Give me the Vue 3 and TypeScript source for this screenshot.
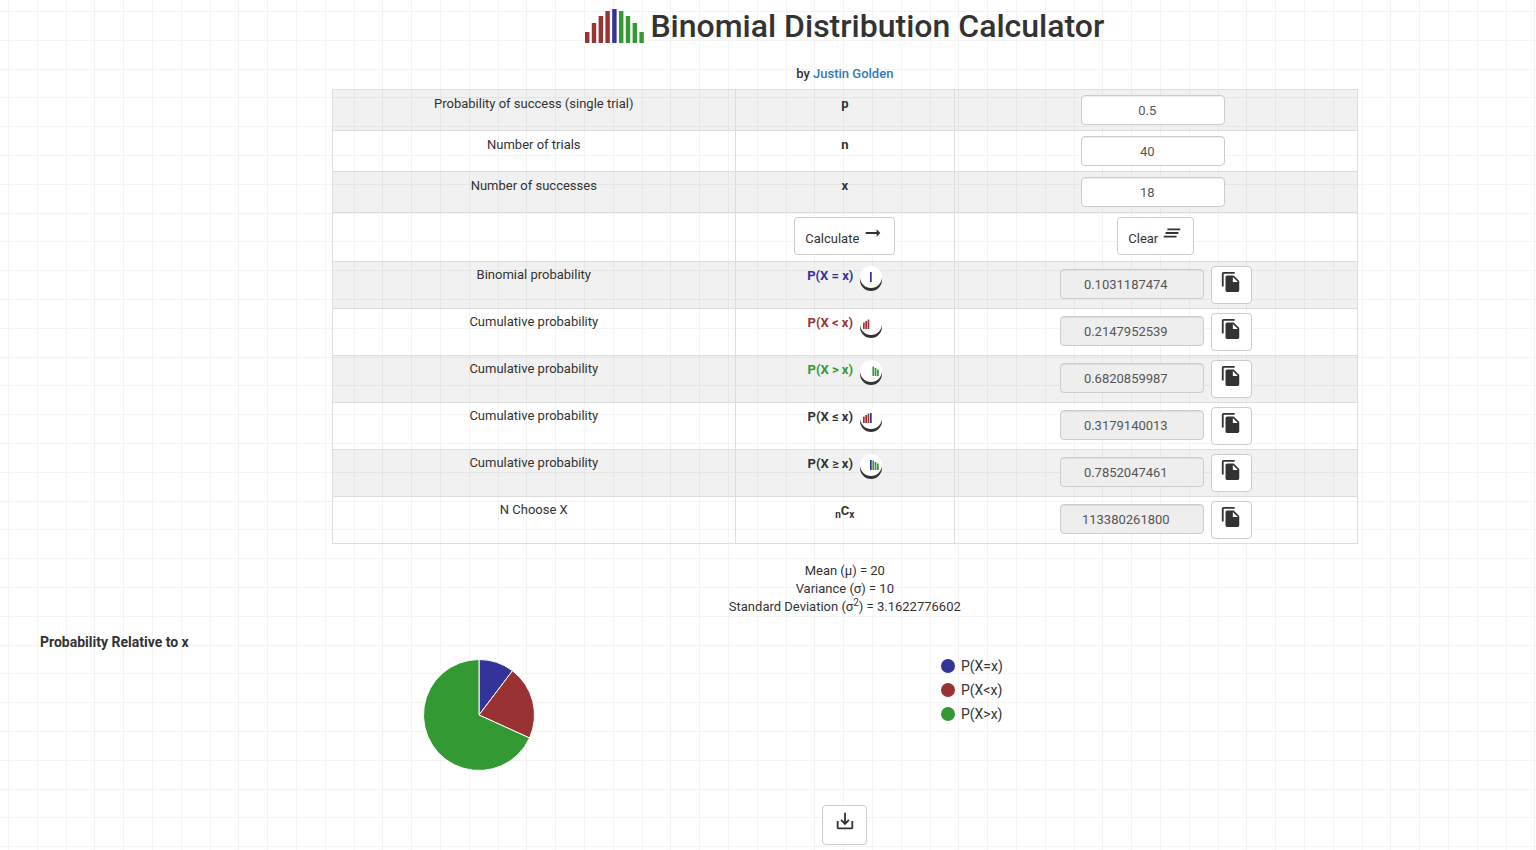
<script setup lang="ts">
import { computed, ref } from 'vue'

type Tone = 'blue' | 'red' | 'green' | 'dark'
interface Bar { x: number; h: number; tone: Tone }

const pInput = ref('0.5')
const nInput = ref('40')
const xInput = ref('18')
const params = ref({ p: 0.5, n: 40, x: 18 })

function calculate(): void {
  params.value = { p: Number(pInput.value), n: Number(nInput.value), x: Number(xInput.value) }
}
function clearAll(): void {
  pInput.value = ''
  nInput.value = ''
  xInput.value = ''
}
function copy(text: string): void {
  navigator.clipboard?.writeText(text)
}

function choose(n: number, k: number): number {
  let r = 1
  for (let i = 1; i <= k; i++) r = (r * (n - k + i)) / i
  return Math.round(r)
}
function pmf(k: number): number {
  const { p, n } = params.value
  return choose(n, k) * Math.pow(p, k) * Math.pow(1 - p, n - k)
}

const equal = computed(() => pmf(params.value.x))
const less = computed(() => {
  let s = 0
  for (let i = 0; i < params.value.x; i++) s += pmf(i)
  return s
})
const greater = computed(() => 1 - less.value - equal.value)
const mean = computed(() => params.value.n * params.value.p)
const variance = computed(() => mean.value * (1 - params.value.p))
const deviation = computed(() => Math.sqrt(variance.value).toFixed(10))

const logoBars: Bar[] = [11, 20, 27, 32, 34, 32, 27, 20, 11].map((h, i) => ({
  x: i * 6.8, h, tone: i < 4 ? 'red' : i === 4 ? 'blue' : 'green',
}))
const lowBars: Bar[] = [
  { x: 3, h: 6.4, tone: 'red' }, { x: 5.3, h: 8, tone: 'red' }, { x: 7.6, h: 9.4, tone: 'red' },
]
const midBar: Bar = { x: 10, h: 10, tone: 'blue' }
const highBars: Bar[] = [
  { x: 12.4, h: 9.4, tone: 'green' }, { x: 14.7, h: 8, tone: 'green' }, { x: 17, h: 6.4, tone: 'green' },
]

const inputs = [
  { id: 'p', label: 'Probability of success (single trial)', model: pInput },
  { id: 'n', label: 'Number of trials', model: nInput },
  { id: 'x', label: 'Number of successes', model: xInput },
]
const results = computed(() => [
  { id: 'eq', label: 'Binomial probability', sym: 'P(X = x)', tone: 'blue', bars: [midBar], value: equal.value.toFixed(10) },
  { id: 'lt', label: 'Cumulative probability', sym: 'P(X < x)', tone: 'red', bars: lowBars, value: less.value.toFixed(10) },
  { id: 'gt', label: 'Cumulative probability', sym: 'P(X > x)', tone: 'green', bars: highBars, value: greater.value.toFixed(10) },
  { id: 'le', label: 'Cumulative probability', sym: 'P(X ≤ x)', tone: 'dark', bars: [...lowBars, midBar], value: (less.value + equal.value).toFixed(10) },
  { id: 'ge', label: 'Cumulative probability', sym: 'P(X ≥ x)', tone: 'dark', bars: [midBar, ...highBars], value: (1 - less.value).toFixed(10) },
  { id: 'nc', label: 'N Choose X', sym: '', tone: 'dark', bars: [] as Bar[], value: String(choose(params.value.n, params.value.x)) },
])

const slices = computed(() => {
  const parts = [
    { tone: 'blue', label: 'P(X=x)', v: equal.value },
    { tone: 'red', label: 'P(X<x)', v: less.value },
    { tone: 'green', label: 'P(X>x)', v: greater.value },
  ]
  let from = 0
  const point = (t: number) => `${56 + 55.5 * Math.sin(2 * Math.PI * t)} ${56 - 55.5 * Math.cos(2 * Math.PI * t)}`
  return parts.map((s) => {
    const d = `M56 56L${point(from)}A55.5 55.5 0 ${s.v > 0.5 ? 1 : 0} 1 ${point(from + s.v)}Z`
    from += s.v
    return { ...s, d }
  })
})
</script>

<template>
  <div class="page">
    <main class="content">
      <header>
        <h1>
          <svg class="logo" width="59" height="34" viewBox="0 0 59 34" aria-hidden="true">
            <rect v-for="b in logoBars" :key="b.x" :class="b.tone" :x="b.x" :y="34 - b.h" width="4.4" :height="b.h" />
          </svg>
          <span>Binomial Distribution Calculator</span>
        </h1>
        <p class="byline">by <a href="#">Justin Golden</a></p>
      </header>

      <table>
        <colgroup><col class="side"><col class="mid"><col class="side"></colgroup>
        <tbody>
          <tr v-for="f in inputs" :key="f.id" class="entry">
            <td><label :for="f.id">{{ f.label }}</label></td>
            <th scope="row">{{ f.id }}</th>
            <td><input :id="f.id" v-model="f.model.value" class="field given" type="text" inputmode="decimal"></td>
          </tr>
          <tr class="actions">
            <td></td>
            <td>
              <button type="button" class="btn" @click="calculate">
                <span>Calculate</span>
                <svg class="icon" viewBox="0 0 24 24" aria-hidden="true"><path d="M16.01 11H4v2h12.01v3L20 12l-3.99-4z" /></svg>
              </button>
            </td>
            <td>
              <button type="button" class="btn" @click="clearAll">
                <span>Clear</span>
                <svg class="icon" viewBox="0 0 24 24" aria-hidden="true"><path d="M5 13h14v-2H5v2zm-2 4h14v-2H3v2zM7 7v2h14V7H7z" /></svg>
              </button>
            </td>
          </tr>
          <tr v-for="r in results" :key="r.id" class="result">
            <td><label :for="r.id">{{ r.label }}</label></td>
            <th scope="row">
              <span v-if="r.sym" class="symbol" :class="r.tone">
                <span>{{ r.sym }}</span>
                <svg class="badge" width="22" height="22" viewBox="0 0 22 22" aria-hidden="true">
                  <rect v-for="b in r.bars" :key="b.x" :class="b.tone" :x="b.x" :y="16 - b.h" width="1.7" :height="b.h" />
                </svg>
              </span>
              <span v-else class="choose"><sub>n</sub>C<sub>x</sub></span>
            </th>
            <td>
              <div class="output">
                <input :id="r.id" class="field" type="text" readonly :value="r.value">
                <button type="button" class="btn copy" aria-label="Copy" @click="copy(r.value)">
                  <svg class="icon" viewBox="0 0 24 24" aria-hidden="true"><path fill-rule="evenodd" d="M16 1H4c-1.1 0-2 .9-2 2v14h2V3h12V1zm-1 4l6 6v10c0 1.1-.9 2-2 2H7.99C6.89 23 6 22.1 6 21l.01-14c0-1.1.89-2 1.99-2h7zm-1 7h5.5L14 6.5V12z" /></svg>
                </button>
              </div>
            </td>
          </tr>
        </tbody>
      </table>

      <div class="stats">
        <div>Mean (μ) = {{ mean }}</div>
        <div>Variance (σ) = {{ variance }}</div>
        <div>Standard Deviation (σ<sup>2</sup>) = {{ deviation }}</div>
      </div>
    </main>

    <section class="chart">
      <h2>Probability Relative to x</h2>
      <div class="plot">
        <div class="pie">
          <svg width="112" height="112" viewBox="0 0 112 112" role="img" aria-label="Probability Relative to x">
            <path v-for="s in slices" :key="s.tone" :class="s.tone" :d="s.d" stroke="#fff" stroke-width="1" />
          </svg>
        </div>
        <ul class="legend">
          <li v-for="s in slices" :key="s.tone"><i class="dot" :class="s.tone"></i>{{ s.label }}</li>
        </ul>
      </div>
    </section>

    <footer>
      <button type="button" class="btn save" aria-label="Download">
        <svg class="icon" viewBox="0 0 24 24" aria-hidden="true"><path d="M19 12v7H5v-7H3v7c0 1.1.9 2 2 2h14c1.1 0 2-.9 2-2v-7h-2zm-6 .67l2.59-2.58L17 11.5l-5 5-5-5 1.41-1.41L11 12.67V3h2z" /></svg>
      </button>
    </footer>
  </div>
</template>

<style>
body {
  --line: #f4f4f4;
  background-color: #fff;
  background-image:
    linear-gradient(to right, var(--line) 1px, transparent 1px),
    linear-gradient(to right, transparent 20%, var(--line) 20%, var(--line) calc(20% + 1px), transparent calc(20% + 1px)),
    linear-gradient(to right, transparent 40%, var(--line) 40%, var(--line) calc(40% + 1px), transparent calc(40% + 1px)),
    linear-gradient(to right, transparent 60%, var(--line) 60%, var(--line) calc(60% + 1px), transparent calc(60% + 1px)),
    linear-gradient(to right, transparent 80%, var(--line) 80%, var(--line) calc(80% + 1px), transparent calc(80% + 1px)),
    linear-gradient(to bottom, var(--line) 1px, transparent 1px),
    linear-gradient(to bottom, transparent 20%, var(--line) 20%, var(--line) calc(20% + 1px), transparent calc(20% + 1px)),
    linear-gradient(to bottom, transparent 40%, var(--line) 40%, var(--line) calc(40% + 1px), transparent calc(40% + 1px)),
    linear-gradient(to bottom, transparent 60%, var(--line) 60%, var(--line) calc(60% + 1px), transparent calc(60% + 1px)),
    linear-gradient(to bottom, transparent 80%, var(--line) 80%, var(--line) calc(80% + 1px), transparent calc(80% + 1px));
  background-size: 144px 144px;
  background-position: 8px 11px;
}
</style>

<style scoped>
.page {
  font: 13px/18px Roboto, "Liberation Sans", sans-serif;
  color: #333;
}
.page *, .page { box-sizing: border-box; }
.content, footer { padding-left: 10%; }
h1 {
  display: flex;
  justify-content: center;
  align-items: center;
  gap: 6px;
  margin: 0;
  padding-top: 4px;
  font-size: 32px;
  line-height: 44px;
  font-weight: 500;
}
.byline { margin: 17px 0 6px; text-align: center; font-weight: 500; }
a { color: #337ab7; text-decoration: none; }

.blue { color: #339; fill: #339; }
.red { color: #933; fill: #933; }
.green { color: #393; fill: #393; }
.dark { color: #333; fill: #333; }

table {
  width: 74.2%;
  margin: 0 auto;
  table-layout: fixed;
  border-collapse: collapse;
  text-align: center;
}
.side { width: 39.3%; }
.mid { width: 21.4%; }
td, th {
  padding: 4px 5px 0;
  border: 1px solid #ddd;
  vertical-align: top;
}
th { font-weight: 700; }
tr:nth-child(odd) { background: rgba(0, 0, 0, 0.055); }
.entry { height: 41px; }
.actions { height: 49px; }
.result { height: 47px; }
.entry td, .entry th { padding-top: 5px; }
.entry td:last-child { padding-right: 10px; }

.field {
  display: block;
  width: 144px;
  height: 30px;
  padding: 0 22px 0 10px;
  border: 1px solid #ccc;
  border-radius: 4px;
  box-shadow: inset 0 1px 1px rgba(0, 0, 0, 0.075);
  background: #fff;
  color: #555;
  font: inherit;
  text-align: center;
}
.given { margin: 0 auto; }
.field[readonly] { background: #eee; margin-top: 3px; }
.output { display: flex; justify-content: center; align-items: flex-start; gap: 7px; }

.btn {
  display: inline-flex;
  align-items: flex-end;
  justify-content: center;
  gap: 3px;
  height: 38px;
  padding: 4px 10px 5px;
  border: 1px solid #ccc;
  border-radius: 4px;
  background: #fff;
  color: #333;
  font: inherit;
  line-height: 20px;
  vertical-align: top;
}
.icon { flex: none; width: 22px; height: 22px; align-self: flex-start; fill: currentColor; }
.copy { width: 41px; padding: 4px 0; }
.save { width: 45px; height: 40px; padding: 4px 0; }

.symbol { display: inline-flex; gap: 7px; line-height: 20px; }
.badge { border-radius: 50%; background: #fff; box-shadow: 0 3px #333; }
.choose { line-height: 20px; }
sub, sup { font-size: 10px; line-height: 0; position: relative; vertical-align: baseline; }
sub { bottom: -3px; }
sup { top: -5px; }

.stats { margin-top: 18px; text-align: center; }
h2 { margin: 17px 0 8px 40px; font-size: 14px; line-height: 18px; font-weight: 700; }
.plot { display: flex; }
.pie { width: 61%; padding-left: 22px; text-align: center; }
.pie svg { display: block; margin: 0 auto; }
.legend { margin: 0; padding: 0 0 0 4px; list-style: none; font-size: 14px; line-height: 14px; }
.legend li { display: flex; align-items: center; gap: 6px; margin-bottom: 10px; }
.dot { width: 14px; height: 14px; border-radius: 50%; }
.dot.blue { background: #339; }
.dot.red { background: #933; }
.dot.green { background: #393; }
footer { margin-top: 34px; text-align: center; }
</style>
